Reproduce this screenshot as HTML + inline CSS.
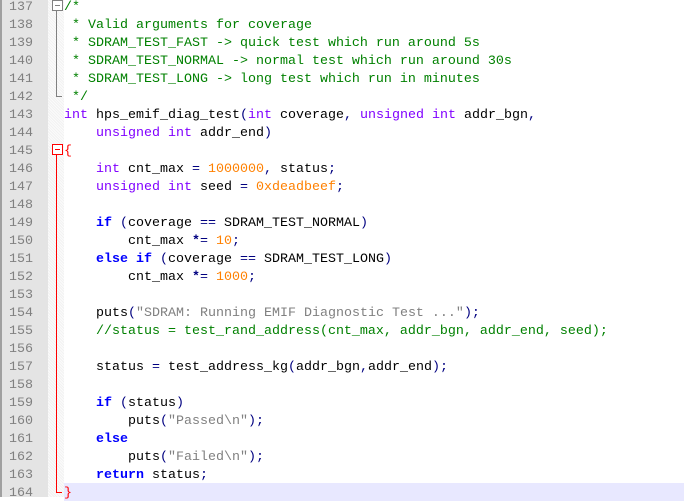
<!DOCTYPE html><html><head><style>
body{margin:0;width:684px;height:497px;overflow:hidden;background:#fff;position:relative;font-family:"Liberation Mono",monospace;font-size:13.33px}
#g{position:absolute;left:0;top:0;width:48px;height:497px;background:#e4e4e4;border-left:2px solid #a0a0a0;box-sizing:border-box}
#m{position:absolute;left:48px;top:0;width:16px;height:497px;background:repeating-linear-gradient(45deg,#f2f2f2 0 1px,#fbfbfb 1px 2px)}
#w{position:absolute;left:0;top:3px;width:684px;height:497px}
.l{position:absolute;left:0;height:18px;line-height:18px;width:684px;white-space:pre}
.n{position:absolute;left:0;width:33px;text-align:right;color:#808080}
.c{position:absolute;left:64px;color:#000}
.cm{color:#008000}.t{color:#8000ff}.k{color:#0000ff;font-weight:bold}.num{color:#ff8000}.s{color:#808080}.o{color:#000080;font-weight:bold}.p{color:#000080}.r{color:#ff0000}
</style></head><body>
<div id="g"></div><div id="m"></div>
<div style="position:absolute;left:64px;top:483px;width:620px;height:18px;background:#e8e8ff"></div>
<div style="position:absolute;left:52px;top:0;width:9px;height:9px;border:1px solid #808080;background:#fff"><div style="position:absolute;left:2px;top:4px;width:5px;height:1px;background:#808080"></div></div>
<div style="position:absolute;left:56px;top:11px;width:1px;height:86px;background:#808080"></div>
<div style="position:absolute;left:56px;top:96px;width:6px;height:1px;background:#808080"></div>
<div style="position:absolute;left:52px;top:144px;width:9px;height:9px;border:1px solid #ff0000;background:#fff"><div style="position:absolute;left:2px;top:4px;width:5px;height:1px;background:#ff0000"></div></div>
<div style="position:absolute;left:56px;top:155px;width:1px;height:338px;background:#ff0000"></div>
<div style="position:absolute;left:56px;top:492px;width:6px;height:1px;background:#ff0000"></div>
<div id="w">
<div class="l" style="top:-4px"><span class="n">137</span><span class="c cm">/*</span></div>
<div class="l" style="top:14px"><span class="n">138</span><span class="c cm"> * Valid arguments for coverage</span></div>
<div class="l" style="top:32px"><span class="n">139</span><span class="c cm"> * SDRAM_TEST_FAST -> quick test which run around 5s</span></div>
<div class="l" style="top:50px"><span class="n">140</span><span class="c cm"> * SDRAM_TEST_NORMAL -> normal test which run around 30s</span></div>
<div class="l" style="top:68px"><span class="n">141</span><span class="c cm"> * SDRAM_TEST_LONG -> long test which run in minutes</span></div>
<div class="l" style="top:86px"><span class="n">142</span><span class="c cm"> */</span></div>
<div class="l" style="top:104px"><span class="n">143</span><span class="c"><span class="t">int</span> hps_emif_diag_test<span class="p">(</span><span class="t">int</span> coverage<span class="p">,</span> <span class="t">unsigned</span> <span class="t">int</span> addr_bgn<span class="p">,</span></span></div>
<div class="l" style="top:122px"><span class="n">144</span><span class="c">    <span class="t">unsigned</span> <span class="t">int</span> addr_end<span class="p">)</span></span></div>
<div class="l" style="top:140px"><span class="n">145</span><span class="c r">{</span></div>
<div class="l" style="top:158px"><span class="n">146</span><span class="c">    <span class="t">int</span> cnt_max <span class="p">=</span> <span class="num">1000000</span><span class="p">,</span> status<span class="p">;</span></span></div>
<div class="l" style="top:176px"><span class="n">147</span><span class="c">    <span class="t">unsigned</span> <span class="t">int</span> seed <span class="p">=</span> <span class="num">0xdeadbeef</span><span class="p">;</span></span></div>
<div class="l" style="top:194px"><span class="n">148</span></div>
<div class="l" style="top:212px"><span class="n">149</span><span class="c">    <span class="k">if</span> <span class="p">(</span>coverage <span class="p">==</span> SDRAM_TEST_NORMAL<span class="p">)</span></span></div>
<div class="l" style="top:230px"><span class="n">150</span><span class="c">        cnt_max <span class="o">*</span><span class="p">=</span> <span class="num">10</span><span class="p">;</span></span></div>
<div class="l" style="top:248px"><span class="n">151</span><span class="c">    <span class="k">else</span> <span class="k">if</span> <span class="p">(</span>coverage <span class="p">==</span> SDRAM_TEST_LONG<span class="p">)</span></span></div>
<div class="l" style="top:266px"><span class="n">152</span><span class="c">        cnt_max <span class="o">*</span><span class="p">=</span> <span class="num">1000</span><span class="p">;</span></span></div>
<div class="l" style="top:284px"><span class="n">153</span></div>
<div class="l" style="top:302px"><span class="n">154</span><span class="c">    puts<span class="p">(</span><span class="s">"SDRAM: Running EMIF Diagnostic Test ..."</span><span class="p">);</span></span></div>
<div class="l" style="top:320px"><span class="n">155</span><span class="c cm">    //status = test_rand_address(cnt_max, addr_bgn, addr_end, seed);</span></div>
<div class="l" style="top:338px"><span class="n">156</span></div>
<div class="l" style="top:356px"><span class="n">157</span><span class="c">    status <span class="p">=</span> test_address_kg<span class="p">(</span>addr_bgn<span class="p">,</span>addr_end<span class="p">);</span></span></div>
<div class="l" style="top:374px"><span class="n">158</span></div>
<div class="l" style="top:392px"><span class="n">159</span><span class="c">    <span class="k">if</span> <span class="p">(</span>status<span class="p">)</span></span></div>
<div class="l" style="top:410px"><span class="n">160</span><span class="c">        puts<span class="p">(</span><span class="s">"Passed\n"</span><span class="p">);</span></span></div>
<div class="l" style="top:428px"><span class="n">161</span><span class="c">    <span class="k">else</span></span></div>
<div class="l" style="top:446px"><span class="n">162</span><span class="c">        puts<span class="p">(</span><span class="s">"Failed\n"</span><span class="p">);</span></span></div>
<div class="l" style="top:464px"><span class="n">163</span><span class="c">    <span class="k">return</span> status<span class="p">;</span></span></div>
<div class="l" style="top:482px"><span class="n">164</span><span class="c r">}</span></div>
</div>
</body></html>
